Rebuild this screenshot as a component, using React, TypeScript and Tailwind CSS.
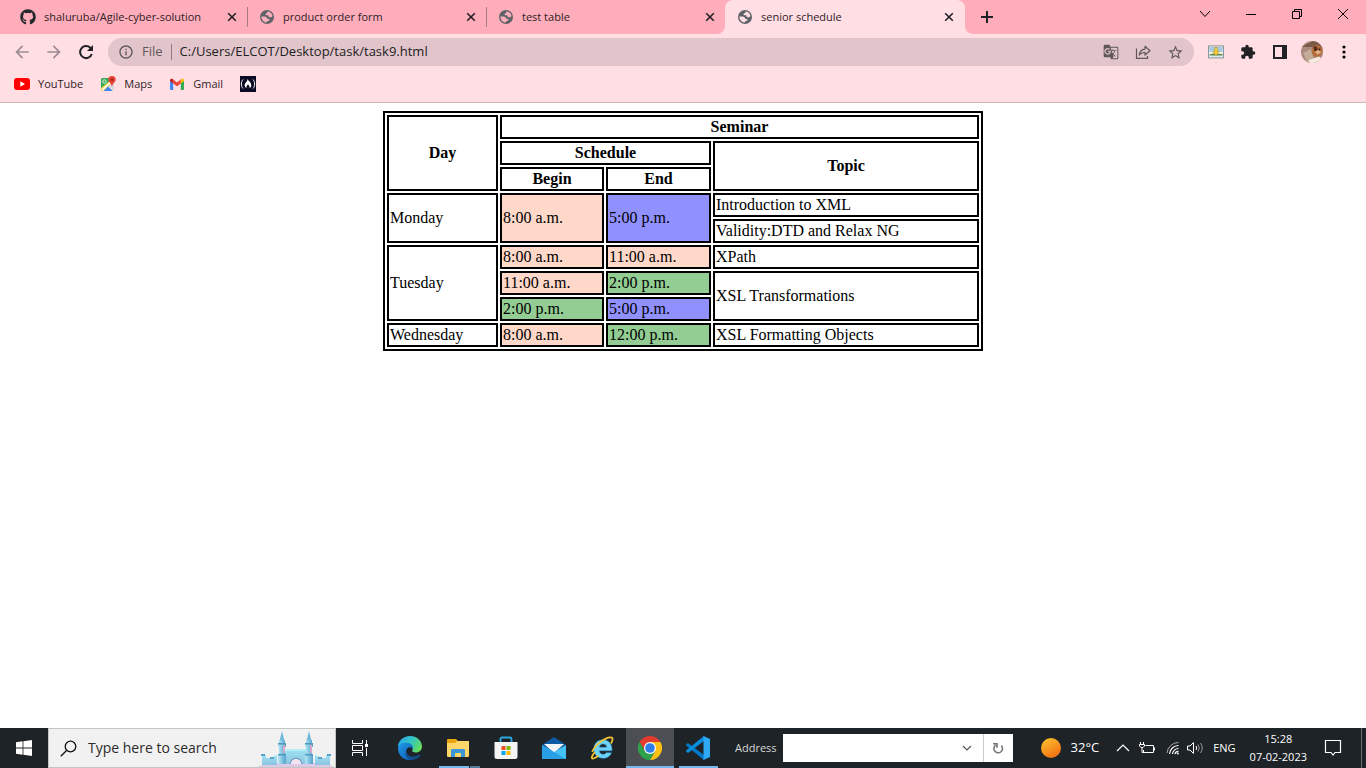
import React from "react";
import { FaGithub } from "react-icons/fa";
import {
  MdArrowBack,
  MdArrowForward,
  MdExtension,
  MdGTranslate,
  MdInfoOutline,
  MdStarOutline,
} from "react-icons/md";

function Globe() {
  return (
    <svg viewBox="0 0 14 14" className="size-3.5" aria-hidden="true">
      <circle cx="7" cy="7" r="7" fill="#5f6368" />
      <path
        className="fill-current"
        d="M7.400 1.500 C10 1.500 12.200 3.400 12.500 6 L11.400 7.200 L9.600 7.300 L8.500 6.400 L8.400 5.300 L6.400 5.200 L5.300 4.300 L6.300 3.300 L7.300 3.100 Z M1.400 6.500 L5 6.500 L6.800 7.400 L7.200 8.700 L9.300 9 L9.400 10.500 L7.300 11.200 L6.700 12.600 C4 12.500 1.400 10.200 1.400 6.500 Z"
      />
    </svg>
  );
}

type TabProps = { title: string; github?: boolean; active?: boolean };

function Tab({ title, github, active }: TabProps) {
  return (
    <div
      className={
        active
          ? "relative flex h-[34px] w-60 min-w-0 items-center rounded-t-lg bg-[#ffdee4] pr-[11px] pl-3 text-[#ffdee4]"
          : "relative flex h-[34px] w-[239px] min-w-0 items-center pr-[10px] pl-3 text-[#ffadbb]"
      }
    >
      {active && (
        <>
          <svg viewBox="0 0 8 8" className="absolute bottom-0 -left-2 size-2" aria-hidden="true">
            <path d="M8 0 V8 H0 A8 8 0 0 0 8 0Z" fill="#ffdee4" />
          </svg>
          <svg viewBox="0 0 8 8" className="absolute -right-2 bottom-0 size-2" aria-hidden="true">
            <path d="M0 0 V8 H8 A8 8 0 0 1 0 0Z" fill="#ffdee4" />
          </svg>
        </>
      )}
      <button type="button" role="tab" aria-selected={!!active} className="flex min-w-0 flex-1 items-center gap-2 text-left">
        <span className="flex size-4 shrink-0 items-center justify-center">
          {github ? <FaGithub className="size-4 text-[#24292f]" /> : <Globe />}
        </span>
        <span className="truncate text-[11px] text-[#2f2226]">{title}</span>
      </button>
      <button type="button" aria-label={`Close ${title}`} className="flex shrink-0 text-[#202124]">
        <svg viewBox="0 0 10 10" className="size-2.5" aria-hidden="true">
          <path d="M1.200 1.200 L8.800 8.800 M8.800 1.200 L1.200 8.800" stroke="currentColor" strokeWidth="1.600" />
        </svg>
      </button>
    </div>
  );
}

function TabStrip() {
  return (
    <header className="flex h-[34px] bg-[#ffadbb] pl-2">
      <div role="tablist" className="flex min-w-0">
        <Tab title="shaluruba/Agile-cyber-solution" github />
        <span className="my-auto -mr-px h-5 w-px shrink-0 bg-[#a97983]" />
        <Tab title="product order form" />
        <span className="my-auto -mr-px h-5 w-px shrink-0 bg-[#a97983]" />
        <Tab title="test table" />
        <Tab title="senior schedule" active />
      </div>
      <button type="button" aria-label="New tab" className="ml-2 flex w-7 items-center justify-center text-[#202124]">
        <svg viewBox="0 0 12 12" className="size-3" aria-hidden="true">
          <path d="M6 0 V12 M0 6 H12" stroke="currentColor" strokeWidth="2" />
        </svg>
      </button>
      <div className="ml-auto flex h-7 text-black">
        <button type="button" aria-label="Search tabs" className="flex w-[46px] items-center justify-center">
          <svg viewBox="0 0 12 12" className="size-3" aria-hidden="true">
            <path d="M1 3 L6 8.500 L11 3" fill="none" stroke="currentColor" />
          </svg>
        </button>
        <button type="button" aria-label="Minimize" className="flex w-[46px] items-center justify-center">
          <span className="h-px w-2.5 bg-black" />
        </button>
        <button type="button" aria-label="Restore" className="flex w-[46px] items-center justify-center">
          <svg viewBox="0 0 10 10" className="size-2.5" aria-hidden="true">
            <path d="M.5 2.500 H7.500 V9.500 H.5Z M2.500 2.500 V.5 H9.500 V7.500 H7.500" fill="none" stroke="currentColor" />
          </svg>
        </button>
        <button type="button" aria-label="Close window" className="flex w-[46px] items-center justify-center">
          <svg viewBox="0 0 10 10" className="size-2.5" aria-hidden="true">
            <path d="M0 0 L10 10 M10 0 L0 10" stroke="currentColor" />
          </svg>
        </button>
      </div>
    </header>
  );
}

function Toolbar() {
  return (
    <div className="flex h-9 items-center bg-[#ffdee4] pr-5 pl-3">
      <div className="flex shrink-0 items-center gap-3">
        <button type="button" aria-label="Back" className="text-[#9d8c91]">
          <MdArrowBack className="size-5" />
        </button>
        <button type="button" aria-label="Forward" className="text-[#9d8c91]">
          <MdArrowForward className="size-5" />
        </button>
        <button type="button" aria-label="Reload" className="text-[#202124]">
          <svg viewBox="0 0 20 20" className="size-5" aria-hidden="true">
            <path d="M15.800 12 A6 6 0 1 1 14.300 5.800 L16 7.500" fill="none" stroke="currentColor" strokeWidth="2" />
            <path d="M17 3 V9 H11Z" fill="currentColor" />
          </svg>
        </button>
      </div>
      <div className="ml-3 flex h-7 min-w-0 flex-1 items-center rounded-full bg-[#e2c5ca] pr-2.5 pl-2.5 text-[#5f585b]">
        <MdInfoOutline className="size-4 shrink-0" />
        <span className="ml-2 text-[13px]">File</span>
        <span className="mx-2 h-4 w-px bg-[#8d7b80]" />
        <input
          aria-label="Address and search bar"
          defaultValue="C:/Users/ELCOT/Desktop/task/task9.html"
          className="min-w-0 flex-1 bg-transparent text-[13px] text-[#202124] outline-none"
        />
        <div className="flex shrink-0 items-center gap-4">
          <button type="button" aria-label="Translate">
            <MdGTranslate className="size-4" />
          </button>
          <button type="button" aria-label="Share">
            <svg viewBox="0 0 16 16" className="size-4" fill="none" stroke="currentColor" strokeWidth="1.200" aria-hidden="true">
              <path d="M1.500 4.500 V14.400 H12.500 V12" />
              <path d="M4.300 11 C4.700 7.500 6.500 5.400 10 5.100 V2.300 L15 6.800 L10 11 V8.400 C7.500 8.400 5.700 9.200 4.300 11Z" strokeLinejoin="round" />
            </svg>
          </button>
          <button type="button" aria-label="Bookmark this page">
            <MdStarOutline className="size-[17px]" />
          </button>
        </div>
      </div>
      <div className="ml-3.5 flex shrink-0 items-center">
        <button type="button" aria-label="Image downloader">
          <svg viewBox="0 0 16 14" className="h-3.5 w-4" aria-hidden="true">
            <rect x=".5" y=".9" width="15" height="12" fill="#dce9ef" stroke="#8f989c" />
            <rect x="1.500" y="2" width="13" height="5" fill="#a6cbe3" />
            <path d="M1.500 7 L5 6.500 L14.500 7 V9 H1.500Z" fill="#f4f4e8" />
            <path d="M1.500 9.500 L5 8.600 L14.500 9 V10.500 H1.500Z" fill="#65884c" />
            <path d="M6.700 2.500 H9.300 V6.500 H11.500 L8 10.500 L4.500 6.500 H6.700Z" fill="#f7cf35" stroke="#c08b20" strokeWidth=".5" />
          </svg>
        </button>
        <button type="button" aria-label="Extensions" className="ml-4 text-[#202124]">
          <MdExtension className="size-4" />
        </button>
        <button type="button" aria-label="Side panel" className="ml-[17px] text-[#202124]">
          <svg viewBox="0 0 14 14" className="size-3.5" aria-hidden="true">
            <path d="M0 0H14V14H0Z M2 2V12H9V2Z" fill="currentColor" fillRule="evenodd" />
          </svg>
        </button>
        <button type="button" aria-label="Profile" className="ml-3.5">
          <svg viewBox="0 0 22 22" className="size-[22px]" aria-hidden="true">
            <defs>
              <clipPath id="avatar">
                <circle cx="11" cy="11" r="11" />
              </clipPath>
            </defs>
            <g clipPath="url(#avatar)">
              <rect width="22" height="22" fill="#a88b7b" />
              <path d="M0 6 L12 0 H22 V8 L12 6Z" fill="#7b5a48" />
              <path d="M2 12 L10 8 L13 20 L7 22Z" fill="#c4ac98" />
              <ellipse cx="16" cy="10" rx="5.500" ry="6" fill="#b56c3c" />
              <path d="M12 6 L15 5 L17 8 L14 10Z" fill="#63301c" />
              <path d="M14 10 L19 9 L20 12 L16 13.500Z" fill="#e0ae84" />
              <circle cx="14.500" cy="9" r="1" fill="#2b1710" />
              <circle cx="18.500" cy="8.500" r="1" fill="#2b1710" />
              <path d="M8 19 L18 15.500 L21 18 L14 22 H8Z" fill="#f3ebdf" />
            </g>
          </svg>
        </button>
        <button type="button" aria-label="Menu" className="ml-[19px] text-[#202124]">
          <svg viewBox="0 0 4 14" className="h-3.5 w-1" aria-hidden="true">
            <circle cx="2" cy="2" r="1.600" />
            <circle cx="2" cy="7" r="1.600" />
            <circle cx="2" cy="12" r="1.600" />
          </svg>
        </button>
      </div>
    </div>
  );
}

function Bookmarks() {
  return (
    <nav className="flex h-[33px] items-center gap-[17px] border-b border-[#cfb6bb] bg-[#ffdee4] pb-1 pl-3.5 text-[11px] text-[#2f2226]">
      <a href="#youtube" className="flex items-center gap-2">
        <svg viewBox="0 0 16 12" className="h-3 w-4" aria-hidden="true">
          <rect width="16" height="12" rx="3" fill="#f00" />
          <path d="M6.300 3.300 L11 6 L6.300 8.700Z" fill="#fff" />
        </svg>
        YouTube
      </a>
      <a href="#maps" className="flex items-center gap-2">
        <svg viewBox="0 0 16 16" className="size-4" aria-hidden="true">
          <rect x="1" y="2" width="13" height="13" rx="1.500" fill="#dadce0" />
          <path d="M1 3.500 A1.500 1.500 0 0 1 2.500 2 H10 V7 L2 15 L1 14Z" fill="#34a853" />
          <path d="M1 12 L9 5.500 L11 7.500 L3.500 15 H2.500 A1.500 1.500 0 0 1 1 13.500Z" fill="#fbcf3b" />
          <path d="M3.500 15 L8 10.500 L12.500 15Z" fill="#4285f4" />
          <path d="M1.500 13.500 L9.500 6 L10.500 7 L2.500 15Z" fill="#fff" />
          <circle cx="4.400" cy="5.500" r="1.700" fill="none" stroke="#fff" strokeWidth=".9" />
          <path d="M12 0 A3.700 3.700 0 0 1 15.700 3.700 C15.700 6 12.600 7 12 11 C11.400 7 8.300 6 8.300 3.700 A3.700 3.700 0 0 1 12 0Z" fill="#ea4335" />
          <circle cx="12" cy="3.700" r="1.300" fill="#8c1f17" />
        </svg>
        Maps
      </a>
      <a href="#gmail" className="flex items-center gap-2">
        <svg viewBox="0 0 16 12" className="h-3 w-4" aria-hidden="true">
          <path d="M1 2.500 L4.200 4.900 V12 H2 A1 1 0 0 1 1 11Z" fill="#4285f4" />
          <path d="M15 2.500 L11.800 4.900 V12 H14 A1 1 0 0 0 15 11Z" fill="#34a853" />
          <path d="M4.200 1.500 L8 4.400 L11.800 1.500 V5.400 L8 8.300 L4.200 5.400Z" fill="#ea4335" />
          <path d="M1 2.200 C1 .6 2.600 .2 3.700 1.100 L4.200 1.500 V5.400 L1 3Z" fill="#c5221f" />
          <path d="M15 2.200 C15 .6 13.400 .2 12.300 1.100 L11.800 1.500 V5.400 L15 3Z" fill="#fbbc04" />
        </svg>
        Gmail
      </a>
      <a href="#freecodecamp" aria-label="freeCodeCamp">
        <svg viewBox="0 0 16 16" className="size-4" aria-hidden="true">
          <rect width="16" height="16" fill="#0a0a23" />
          <path d="M3 3.500 C.8 6 .8 10 3 12.500 M13 3.500 C15.200 6 15.200 10 13 12.500" fill="none" stroke="#fff" />
          <path d="M7.500 3 C8.500 5 11.300 6.500 11.300 9.200 C11.300 10.800 10.500 11.600 9.500 12.200 C10 10.500 9 9.500 8 8.300 C7 9.500 6 10.500 6.500 12.200 C5.500 11.600 4.700 10.800 4.700 9.200 C4.700 6.800 7.300 6 7.500 3Z" fill="#fff" />
        </svg>
      </a>
    </nav>
  );
}

function ScheduleTable() {
  return (
    <table className="mx-auto w-[600px] table-fixed border-separate border-spacing-0.5 border-2 border-black bg-white font-['Liberation_Serif',serif] text-base leading-[18px] text-black [&_td]:border-2 [&_td]:border-black [&_td]:p-px [&_th]:border-2 [&_th]:border-black [&_th]:p-px">
      <colgroup>
        <col className="w-[111px]" />
        <col className="w-[104px]" />
        <col className="w-[105px]" />
        <col />
      </colgroup>
      <thead>
        <tr>
          <th rowSpan={3}>Day</th>
          <th colSpan={3}>Seminar</th>
        </tr>
        <tr>
          <th colSpan={2}>Schedule</th>
          <th rowSpan={2}>Topic</th>
        </tr>
        <tr>
          <th>Begin</th>
          <th>End</th>
        </tr>
      </thead>
      <tbody>
        <tr>
          <td rowSpan={2}>Monday</td>
          <td rowSpan={2} className="bg-[#ffd8c9]">8:00 a.m.</td>
          <td rowSpan={2} className="bg-[#9090ff]">5:00 p.m.</td>
          <td>Introduction to XML</td>
        </tr>
        <tr>
          <td>Validity:DTD and Relax NG</td>
        </tr>
        <tr>
          <td rowSpan={3}>Tuesday</td>
          <td className="bg-[#ffd8c9]">8:00 a.m.</td>
          <td className="bg-[#ffd8c9]">11:00 a.m.</td>
          <td>XPath</td>
        </tr>
        <tr>
          <td className="bg-[#ffd8c9]">11:00 a.m.</td>
          <td className="bg-[#93cd93]">2:00 p.m.</td>
          <td rowSpan={2}>XSL Transformations</td>
        </tr>
        <tr>
          <td className="bg-[#93cd93]">2:00 p.m.</td>
          <td className="bg-[#9090ff]">5:00 p.m.</td>
        </tr>
        <tr>
          <td>Wednesday</td>
          <td className="bg-[#ffd8c9]">8:00 a.m.</td>
          <td className="bg-[#93cd93]">12:00 p.m.</td>
          <td>XSL Formatting Objects</td>
        </tr>
      </tbody>
    </table>
  );
}

function Castle() {
  return (
    <svg viewBox="0 0 78 38" className="h-[38px] w-[78px] shrink-0 self-end" aria-hidden="true">
      <defs>
        <linearGradient id="tower" x1="0" x2="1" y1="0" y2="0">
          <stop offset="0" stopColor="#b9e8f4" />
          <stop offset=".55" stopColor="#7cc3e0" />
          <stop offset="1" stopColor="#5b9fc8" />
        </linearGradient>
        <linearGradient id="wall" x1="0" x2="0" y1="0" y2="1">
          <stop offset="0" stopColor="#9fe3f2" />
          <stop offset="1" stopColor="#8cc3e2" />
        </linearGradient>
      </defs>
      <ellipse cx="39" cy="39" rx="39" ry="6" fill="#ddc9e6" />
      <path d="M5 26 H9 V29 H13 L20 26 V36 H5Z M73 26 H69 V29 H65 L58 26 V36 H73Z" fill="url(#wall)" />
      <path d="M4 25 H8 V27 H4Z M70 25 H74 V27 H70Z M13 28 H17 V30 H13Z M61 28 H65 V30 H61Z" fill="#5aa4cb" />
      <path d="M28 20 H50 V35 H46 A7 7 0 0 0 32 35 H28Z" fill="url(#wall)" />
      <path d="M33 35 A6 6 0 0 1 45 35" fill="#f2e4f2" stroke="#5ba4cc" strokeWidth="1.500" />
      <path d="M28 20 H50 V22 H28Z" fill="#b6eef7" />
      {[25, 52].map((x) => (
        <g key={x} transform={`translate(${x} 0)`}>
          <path d="M0 2 L2.500 12 H-2.500Z" fill="#6db9dc" />
          <path d="M-3 11 H3 V14 H4 V18 H3 V25 H4 V35 H-4 V25 H-3 V18 H-4 V14 H-3Z" fill="url(#tower)" />
          <path d="M-4 14 H4 V15.500 H-4Z M-4 25 H4 V26.500 H-4Z" fill="#4f98bf" />
          <path d="M1 16 H3 V24 H1Z" fill="#d9a5c9" />
        </g>
      ))}
    </svg>
  );
}

const appButton = "flex h-10 w-12 shrink-0 items-center justify-center";

function TaskbarApps() {
  return (
    <div className="ml-0.5 flex shrink-0">
      <button type="button" aria-label="Microsoft Edge" className={appButton}>
        <svg viewBox="0 0 24 24" className="size-6" aria-hidden="true">
          <defs>
            <linearGradient id="edgeTop" x1="0" x2="1" y1="0.2" y2="0.6">
              <stop offset="0" stopColor="#2aa9e8" />
              <stop offset=".5" stopColor="#33c5c4" />
              <stop offset="1" stopColor="#64dc5c" />
            </linearGradient>
            <linearGradient id="edgeBody" x1="0" x2="1" y1="0" y2="1">
              <stop offset="0" stopColor="#1f9be8" />
              <stop offset="1" stopColor="#1057b4" />
            </linearGradient>
          </defs>
          <path d="M0 11 C0 5 5 0 12 0 C19 0 24 5 24 10.500 C24 14 21.500 16.500 18 16.500 C15 16.500 13.500 15.300 14.300 14.200 C16 11.500 13.500 7.500 8.700 7.500 C4.500 7.500 1.300 9.500 0 11Z" fill="url(#edgeTop)" />
          <path d="M0 12 C0 8.500 4 6.500 8.500 6.800 C13 7 15.500 10 15 13 C12 9.500 8 12 8 16 C8 20 12 23 15.500 23.200 C7 26 0 20.500 0 12Z" fill="url(#edgeBody)" />
          <path d="M8.500 14.500 C8 19.500 13.500 22.500 20.500 19.200 C22 18.500 22.800 18.800 22 20 C19.500 23.200 15.500 24 13 23.700 C7 22 6.500 16.500 8.500 14.500Z" fill="#124f91" />
        </svg>
      </button>
      <button type="button" aria-label="File Explorer" className={`relative ${appButton}`}>
        <svg viewBox="0 0 22 20" className="h-5 w-[22px]" aria-hidden="true">
          <path d="M0 2 A1 1 0 0 1 1 1 H9 L11 3 H21 A1 1 0 0 1 22 4 V10 H0Z" fill="#e9a512" />
          <path d="M0 5 H8 L10 3 H22 V18 A1 1 0 0 1 21 19 H1 A1 1 0 0 1 0 18Z" fill="#fdd669" />
          <path d="M4 19 V12 A1 1 0 0 1 5 11 H17 A1 1 0 0 1 18 12 V19 H14 V15 H8 V19Z" fill="#3b96d9" />
        </svg>
        <span className="absolute bottom-0 left-[5px] h-0.5 w-[30px] bg-[#76b9ed]" />
        <span className="absolute bottom-0 left-9 h-0.5 w-2.5 bg-[#527a9a]" />
      </button>
      <button type="button" aria-label="Microsoft Store" className={appButton}>
        <svg viewBox="0 0 24 24" className="size-6" aria-hidden="true">
          <path d="M6.500 7 V3 A1.500 1.500 0 0 1 8 1.500 H16 A1.500 1.500 0 0 1 17.500 3 V7" fill="none" stroke="#2aa6e0" strokeWidth="1.800" />
          <path d="M.5 6 H23.500 V20.500 A2.500 2.500 0 0 1 21 23 H3 A2.500 2.500 0 0 1 .5 20.500Z" fill="#f4f4f4" />
          <rect x="7.500" y="10" width="4" height="4" fill="#f25022" />
          <rect x="12.500" y="10" width="4" height="4" fill="#7fba00" />
          <rect x="7.500" y="15" width="4" height="4" fill="#00a4ef" />
          <rect x="12.500" y="15" width="4" height="4" fill="#ffb900" />
        </svg>
      </button>
      <button type="button" aria-label="Mail" className={appButton}>
        <svg viewBox="0 0 24 22" className="h-[22px] w-6" aria-hidden="true">
          <path d="M0 8 L12 0 L24 8 L12 16Z" fill="#0c59a4" />
          <path d="M2 7 H22 L12 16Z" fill="#f2f5f8" />
          <path d="M0 8 L11 14.500 L0 22Z" fill="#1c8fdc" />
          <path d="M0 22 L24 8 V22Z" fill="#45c2f5" />
          <path d="M0 8 L24 22 H0Z" fill="#2a9fe6" />
        </svg>
      </button>
      <button type="button" aria-label="Internet Explorer" className={appButton}>
        <svg viewBox="0 0 24 24" className="size-6" aria-hidden="true">
          <path
            d="M22 14.800 H9.300 C9.500 17 11 18.300 13 18.300 C14.500 18.300 15.600 17.700 16.200 16.700 H21.500 C20.200 20.300 17 22.300 13 22.300 C7.500 22.300 3.800 18.500 3.800 13 C3.800 7.500 7.600 3.700 13 3.700 C18.700 3.700 22.300 7.800 22 14.800Z M9.400 11.200 H16.700 C16.400 9.200 15 8 13 8 C11.100 8 9.800 9.200 9.400 11.200Z"
            fill="#6dd2f8"
            stroke="#2a8fd0"
            strokeWidth=".5"
            fillRule="evenodd"
          />
          <path d="M5 16 C1 20.500 .8 23.500 4 22.300 C5.500 21.700 7 20.800 8.500 19.600 M21 7.500 C23.500 3 23 1.200 20.500 1.300 C15 1.500 5 8.500 2.200 16" fill="none" stroke="#f6c530" strokeWidth="1.700" />
        </svg>
      </button>
      <button type="button" aria-label="Google Chrome" className={`border-b-2 border-[#76b9ed] bg-[#4b4e52] pt-0.5 ${appButton}`}>
        <svg viewBox="0 0 24 24" className="size-6" aria-hidden="true">
          <path d="M12 12 L1.600 6 A12 12 0 0 1 22.400 6Z" fill="#e33b2e" />
          <path d="M12 6 H22.400 A12 12 0 0 1 12 24 L17.200 15Z" fill="#fbc116" />
          <path d="M1.600 6 A12 12 0 0 0 12 24 L17.200 15 L12 12 L6.800 15Z" fill="#2da14b" />
          <path d="M12 6 H22.400 L17.200 15Z" fill="#fbc116" />
          <path d="M1.600 6 L6.800 15 L12 6Z" fill="#e33b2e" />
          <path d="M1.600 6 A12 12 0 0 0 0 12 L6.800 15Z" fill="#2da14b" />
          <circle cx="12" cy="12" r="6" fill="#fff" />
          <circle cx="12" cy="12" r="4.800" fill="#2f7de9" />
        </svg>
      </button>
      <button type="button" aria-label="Visual Studio Code" className={`relative ${appButton}`}>
        <svg viewBox="0 0 24 24" className="size-6" aria-hidden="true">
          <path d="M0 8.500 L2 7 L18 19 V24 L0.300 9.700Z" fill="#0078c8" />
          <path d="M0 15.500 L2 17 L18 5 V0 L0.300 14.300Z" fill="#0a8ddd" />
          <path d="M17.500 0 L24 3 V21 L17.500 24Z" fill="#2fa9f3" />
        </svg>
        <span className="absolute bottom-0 left-[5px] h-0.5 w-[39px] bg-[#76b9ed]" />
      </button>
    </div>
  );
}

function Tray() {
  return (
    <div className="ml-auto flex h-10 shrink-0 items-center text-white">
      <button type="button" className="flex items-center gap-2.5 text-[13px]">
        <svg viewBox="0 0 20 20" className="size-5" aria-hidden="true">
          <defs>
            <linearGradient id="sun" x1="0.2" x2="0.8" y1="0" y2="1">
              <stop offset="0" stopColor="#fbc02f" />
              <stop offset="1" stopColor="#f26a10" />
            </linearGradient>
          </defs>
          <circle cx="10" cy="10" r="10" fill="url(#sun)" />
        </svg>
        32°C
      </button>
      <button type="button" aria-label="Show hidden icons" className="ml-[17px]">
        <svg viewBox="0 0 14 8" className="h-2 w-3.5" aria-hidden="true">
          <path d="M1 7 L7 1 L13 7" fill="none" stroke="currentColor" strokeWidth="1.200" />
        </svg>
      </button>
      <button type="button" aria-label="Battery" className="ml-2">
        <svg viewBox="0 0 18 14" className="h-3.5 w-[18px]" fill="none" stroke="currentColor" aria-hidden="true">
          <path d="M7.500 4.500 H15.500 V11.500 H5.500 V9 M16.500 6.500 V9.500" />
          <path d="M2.500 1 V3 M5.500 1 V3 M1.500 3.500 H6.500 V5 L5 6.500 H3 L1.500 5Z M4 6.500 V11.500 H6" />
        </svg>
      </button>
      <button type="button" aria-label="Network" className="ml-2.5">
        <svg viewBox="0 0 14 14" className="size-3.5" fill="none" stroke="currentColor" aria-hidden="true">
          <path d="M1 12 A11.500 11.500 0 0 1 12.500 1.500" stroke="#aaa" />
          <path d="M3.500 13 A9 9 0 0 1 12.500 4.500 M6.500 13 A6 6 0 0 1 12.500 7.500 M9 13 A3.500 3.500 0 0 1 12.500 10.300" strokeWidth="1.200" />
          <circle cx="11.800" cy="12.500" r="1" fill="currentColor" stroke="none" />
        </svg>
      </button>
      <button type="button" aria-label="Volume" className="ml-1.5">
        <svg viewBox="0 0 18 14" className="h-3.5 w-[18px]" fill="none" stroke="currentColor" aria-hidden="true">
          <path d="M1.500 5 H4 L7.500 1.500 V12.500 L4 9 H1.500Z" />
          <path d="M10 5 Q11.300 7 10 9" />
          <path d="M12 3.500 Q14.500 7 12 10.500 M14.500 2 Q18 7 14.500 12" stroke="#9a9a9a" />
        </svg>
      </button>
      <button type="button" className="ml-[9px] text-[11px]">
        ENG
      </button>
      <button type="button" className="ml-3.5 flex flex-col items-center text-[11px] leading-[18px]">
        <span>15:28</span>
        <span>07-02-2023</span>
      </button>
      <button type="button" aria-label="Notifications" className="ml-[17px]">
        <svg viewBox="0 0 18 18" className="size-[18px]" fill="none" stroke="currentColor" strokeWidth="1.200" aria-hidden="true">
          <path d="M1.500 1.500 H16.500 V13.500 H11 L9 16 L7 13.500 H1.500Z" />
        </svg>
      </button>
      <button type="button" aria-label="Show desktop" className="ml-[19px] h-10 w-[5px] border-l border-[#6d7073]" />
    </div>
  );
}

function Taskbar() {
  return (
    <footer className="flex h-10 shrink-0 items-center bg-[#1e2327]">
      <button type="button" aria-label="Start" className={appButton}>
        <svg viewBox="0 0 16 16" className="size-4" aria-hidden="true">
          <path d="M0 2.200 L6.600 1.300 V7.600 H0Z M7.400 1.200 L16 0 V7.600 H7.400Z M0 8.400 H6.600 V14.700 L0 13.800Z M7.400 8.400 H16 V16 L7.400 14.800Z" fill="#fff" />
        </svg>
      </button>
      <label className="flex h-10 w-72 shrink-0 items-center border border-[#c5c5c5] bg-[#f1f1f1] pl-[11px]">
        <svg viewBox="0 0 17 17" className="size-[17px] shrink-0" fill="none" stroke="#111" strokeWidth="1.300" aria-hidden="true">
          <circle cx="10.500" cy="6.500" r="5.300" />
          <path d="M6.500 10.500 L.8 16.200" />
        </svg>
        <input
          type="search"
          aria-label="Search Windows"
          placeholder="Type here to search"
          className="ml-[11px] min-w-0 flex-1 bg-transparent text-sm text-[#2b2b2b] outline-none placeholder:text-[#2b2b2b]"
        />
        <Castle />
      </label>
      <button type="button" aria-label="Task View" className={appButton}>
        <svg viewBox="0 0 16 16" className="size-4" fill="none" stroke="#fff" aria-hidden="true">
          <path d="M.5 0 V3.500 H10.500 V0 M.5 16 V12.500 H10.500 V16 M.5 5.500 H10.500 V10.500 H.5Z M14.500 0 V4 M14.500 8 V16" />
          <rect x="13" y="4" width="3" height="3" fill="#fff" stroke="none" />
        </svg>
      </button>
      <TaskbarApps />
      <div className="ml-[13px] flex items-center gap-1.5">
        <label htmlFor="address" className="text-[11px] text-[#d6d6d6]">
          Address
        </label>
        <div className="flex h-7 bg-white text-[#555]">
          <input id="address" className="w-[179px] min-w-0 pl-1 text-xs text-black outline-none" />
          <button type="button" aria-label="Previous addresses" className="flex w-[21px] items-center">
            <svg viewBox="0 0 10 10" className="size-2.5" aria-hidden="true">
              <path d="M1 3 L5 7 L9 3" fill="none" stroke="currentColor" strokeWidth="1.200" />
            </svg>
          </button>
          <button type="button" aria-label="Refresh" className="flex w-[30px] items-center justify-center border-l border-[#ccc] text-[#777]">
            <svg viewBox="0 0 12 12" className="size-3" fill="none" stroke="currentColor" strokeWidth="1.600" aria-hidden="true">
              <path d="M9.300 3.500 A4.300 4.300 0 1 1 3.800 2.900" />
              <path d="M1 1.800 H5 V5.800" />
            </svg>
          </button>
        </div>
      </div>
      <Tray />
    </footer>
  );
}

export default function App() {
  return (
    <div className="flex min-h-screen flex-col bg-white font-['Open_Sans',sans-serif]">
      <TabStrip />
      <Toolbar />
      <Bookmarks />
      <main className="flex-1 pt-2">
        <ScheduleTable />
      </main>
      <Taskbar />
    </div>
  );
}
